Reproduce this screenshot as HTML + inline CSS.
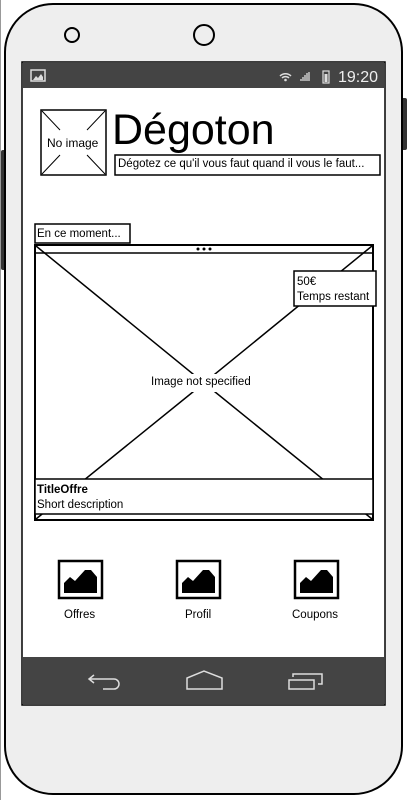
<!DOCTYPE html>
<html><head><meta charset="utf-8"><style>
html,body{margin:0;padding:0;width:408px;height:800px;overflow:hidden;background:#fff}
.t{position:absolute;font-family:"Liberation Sans",sans-serif;color:#000;white-space:nowrap;line-height:1}
</style></head><body>
<svg width="408" height="800" style="position:absolute;left:0;top:0">
<line x1="0.5" y1="0" x2="0.5" y2="800" stroke="#999" stroke-width="1"/>
<rect x="1" y="150" width="6" height="120" rx="2" fill="#333"/>
<rect x="401" y="98" width="6" height="52" rx="2" fill="#333"/>
<rect x="5" y="4" width="397" height="790" rx="48" fill="#eee" stroke="#000" stroke-width="2"/>
<circle cx="72" cy="35" r="7" fill="none" stroke="#000" stroke-width="2"/>
<circle cx="204" cy="35" r="10" fill="none" stroke="#000" stroke-width="2"/>
<rect x="22" y="62" width="363" height="643" fill="#fff" stroke="#000" stroke-width="1.5"/>
<rect x="23" y="63" width="361" height="25" fill="#444"/>
<rect x="31" y="70" width="14" height="11" fill="none" stroke="#ddd" stroke-width="1.5"/>
<path d="M33 80 L36 76 L38 78 L41 74 L43 77 L43 80 Z" fill="#ddd"/>
<path d="M280 76 a8 8 0 0 1 11 0 M282 78 a5 5 0 0 1 7 0" stroke="#ddd" stroke-width="1.5" fill="none"/>
<circle cx="285.5" cy="80" r="1.3" fill="#ddd"/>
<path d="M301 81v-2 M303 81v-4 M305 81v-6 M307 81v-8 M309 81v-9" stroke="#ddd" stroke-width="1.3"/>
<rect x="323" y="71" width="6" height="12" fill="none" stroke="#ddd" stroke-width="1.2"/>
<rect x="324.5" y="74" width="3" height="8" fill="#ddd"/>
<rect x="23" y="657" width="361" height="47" fill="#444"/>
<path d="M94 675 L89 679 L94 683 M89 679 H114 a5 5 0 0 1 0 10 H103" stroke="#ddd" stroke-width="1.5" fill="none"/>
<path d="M187 689 V678 L204 671 L222 678 V689 Z" stroke="#ddd" stroke-width="1.5" fill="none"/>
<rect x="289" y="680" width="25" height="9" stroke="#ddd" stroke-width="1.5" fill="none"/>
<path d="M293 677 V674 H322 V684 H318" stroke="#ddd" stroke-width="1.5" fill="none"/>
<rect x="41" y="110" width="65" height="65" fill="#fff" stroke="#000" stroke-width="1.5"/>
<path d="M42 111 L60 130 M105 111 L87 130 M42 174 L60 155 M105 174 L87 155" stroke="#000" stroke-width="1"/>
<rect x="115" y="155" width="265" height="20" fill="#fff" stroke="#000" stroke-width="1.5"/>
<rect x="35" y="224" width="95" height="19" fill="#fff" stroke="#000" stroke-width="1.5"/>
<rect x="35" y="245" width="338" height="275" fill="#fff" stroke="#000" stroke-width="2"/>
<line x1="35" y1="253" x2="373" y2="253" stroke="#000" stroke-width="1.5"/>
<circle cx="198" cy="249" r="1.5"/><circle cx="204" cy="249" r="1.5"/><circle cx="210" cy="249" r="1.5"/>
<path d="M36 246 L204 383 L372 246 M36 519 L204 383 L372 519" stroke="#000" stroke-width="1.5" fill="none"/>
<rect x="145" y="374" width="118" height="18" fill="#fff"/>
<rect x="294" y="271" width="82" height="35" fill="#fff" stroke="#000" stroke-width="1.5"/>
<rect x="35" y="479" width="338" height="35" fill="#fff" stroke="#000" stroke-width="1.5"/>
<g fill="none" stroke="#000" stroke-width="2.5">
<rect x="59" y="561" width="43" height="37"/><rect x="177" y="561" width="43" height="37"/><rect x="295" y="561" width="43" height="37"/></g>
<g fill="#000">
<path d="M64 593 V583 L70 577 L75 581 L85 570 L91 570 L97 577 V593 Z"/>
<path d="M182 593 V583 L188 577 L193 581 L203 570 L209 570 L215 577 V593 Z"/>
<path d="M300 593 V583 L306 577 L311 581 L321 570 L327 570 L333 577 V593 Z"/></g>
</svg>
<div class="t" style="left:338px;top:70px;font-size:16px;color:#eee">19:20</div>
<div class="t" style="left:47px;top:137px;font-size:12px">No image</div>
<div class="t" style="left:112px;top:109px;font-size:43px">Dégoton</div>
<div class="t" style="left:118px;top:159px;font-size:11.5px">Dégotez ce qu'il vous faut quand il vous le faut...</div>
<div class="t" style="left:37px;top:229px;font-size:11.5px">En ce moment...</div>
<div class="t" style="left:297px;top:275px;font-size:11.5px;line-height:15px">50€<br>Temps restant</div>
<div class="t" style="left:151px;top:377px;font-size:11.5px">Image not specified</div>
<div class="t" style="left:37px;top:483px;font-size:11.5px;line-height:15px"><b>TitleOffre</b><br>Short description</div>
<div class="t" style="left:64px;top:610px;font-size:11.5px">Offres</div>
<div class="t" style="left:185px;top:610px;font-size:11.5px">Profil</div>
<div class="t" style="left:292px;top:610px;font-size:11.5px">Coupons</div>
</body></html>
